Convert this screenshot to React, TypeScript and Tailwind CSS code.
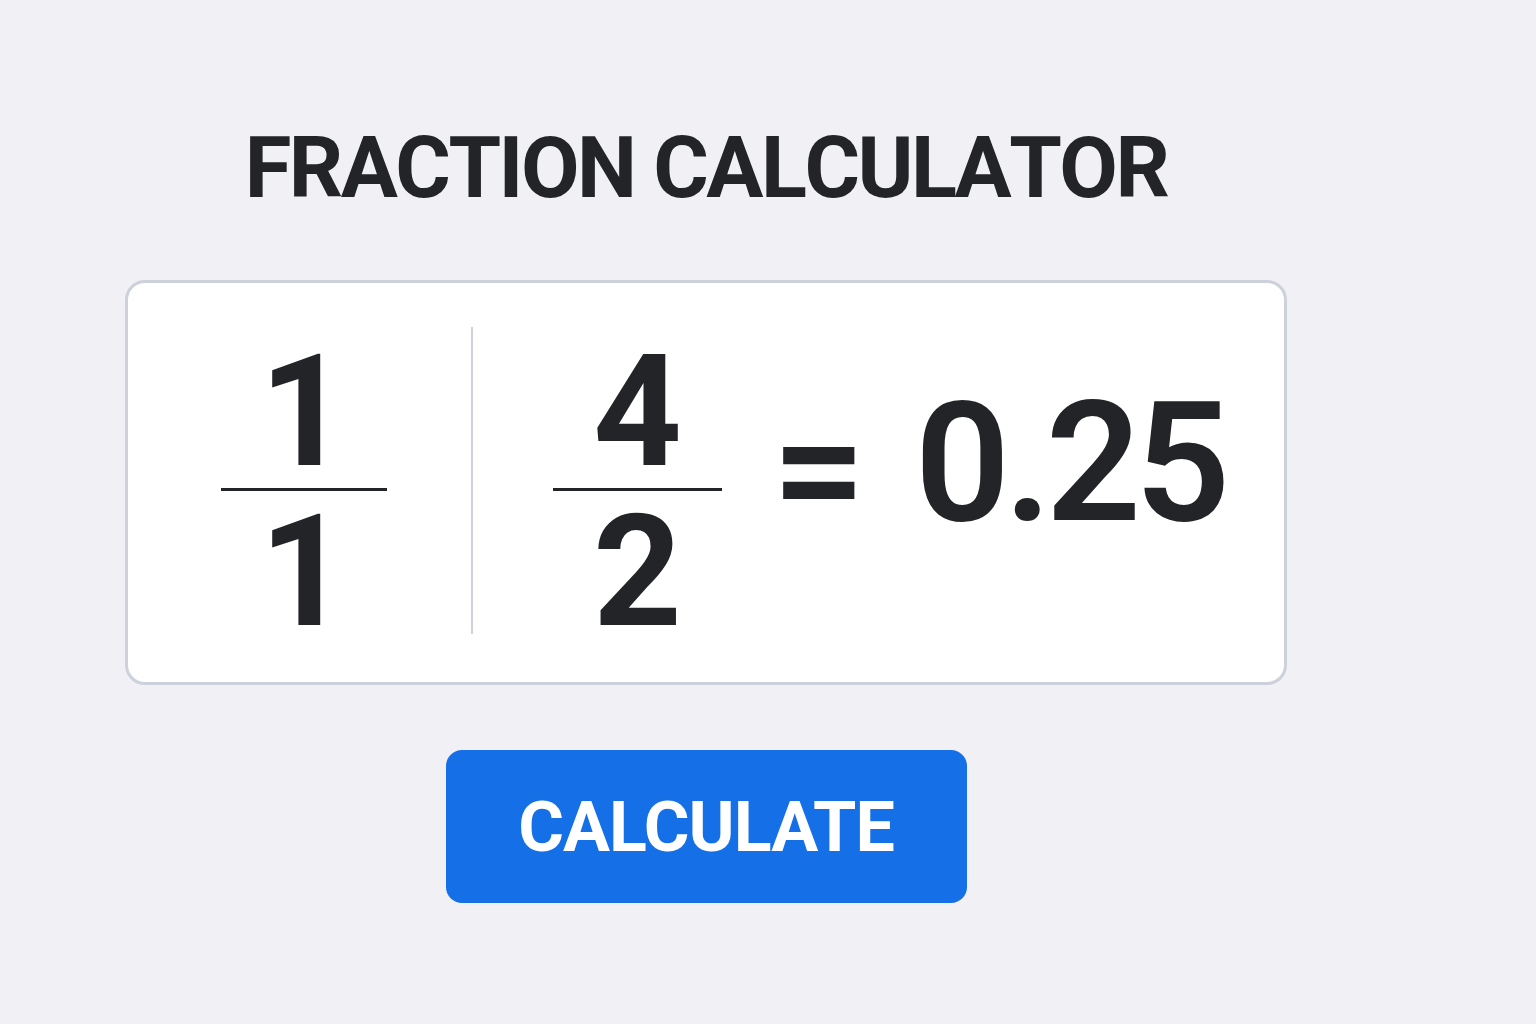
export default function App() {
  const digit = "text-[155px] leading-[120px] font-bold text-[#222428]"

  return (
    <div className="min-h-[1024px] w-full bg-[#f0f0f5] font-['Roboto',sans-serif]">
      <div className="ml-[125px] flex w-[1162px] flex-col items-center pt-[126px]">
        {/* title */}
        <h1 className="text-[85px] leading-none font-bold tracking-[-2.5px] text-[#222428] [font-kerning:none]">
          FRACTION CALCULATOR
        </h1>

        {/* expression card */}
        <div className="mt-[69px] flex h-[405px] w-full items-start rounded-[20px] border-[3px] border-[#cdd1dc] bg-white pl-[93px]">
          <div className="mt-[69px] flex w-[166px] flex-col items-center">
            <span className={digit}>1</span>
            <div className="mt-[16px] h-[3px] w-full bg-[#222428]" />
            <span className={`mt-[21px] ${digit}`}>1</span>
          </div>

          <div className="mt-[44px] ml-[84px] h-[307px] w-[2px] bg-[#cfd2da]" />

          <div className="mt-[69px] ml-[80px] flex w-[169px] flex-col items-center">
            <span className={digit}>4</span>
            <div className="mt-[16px] h-[3px] w-full bg-[#222428]" />
            <span className={`mt-[21px] ${digit}`}>2</span>
          </div>

          <span className="mt-[117px] ml-[50px] text-[165px] leading-[140px] font-semibold text-[#222428]">=</span>
          <span className="mt-[110px] ml-[49px] text-[167px] leading-[140px] font-semibold tracking-[-6px] text-[#222428]">0.25</span>
        </div>

        {/* action */}
        <button className="mt-[65px] flex h-[153px] w-[521px] items-center justify-center rounded-[16px] bg-[#1570e8] text-[70px] leading-none font-bold tracking-[-1px] text-white">
          CALCULATE
        </button>
      </div>
    </div>
  )
}
